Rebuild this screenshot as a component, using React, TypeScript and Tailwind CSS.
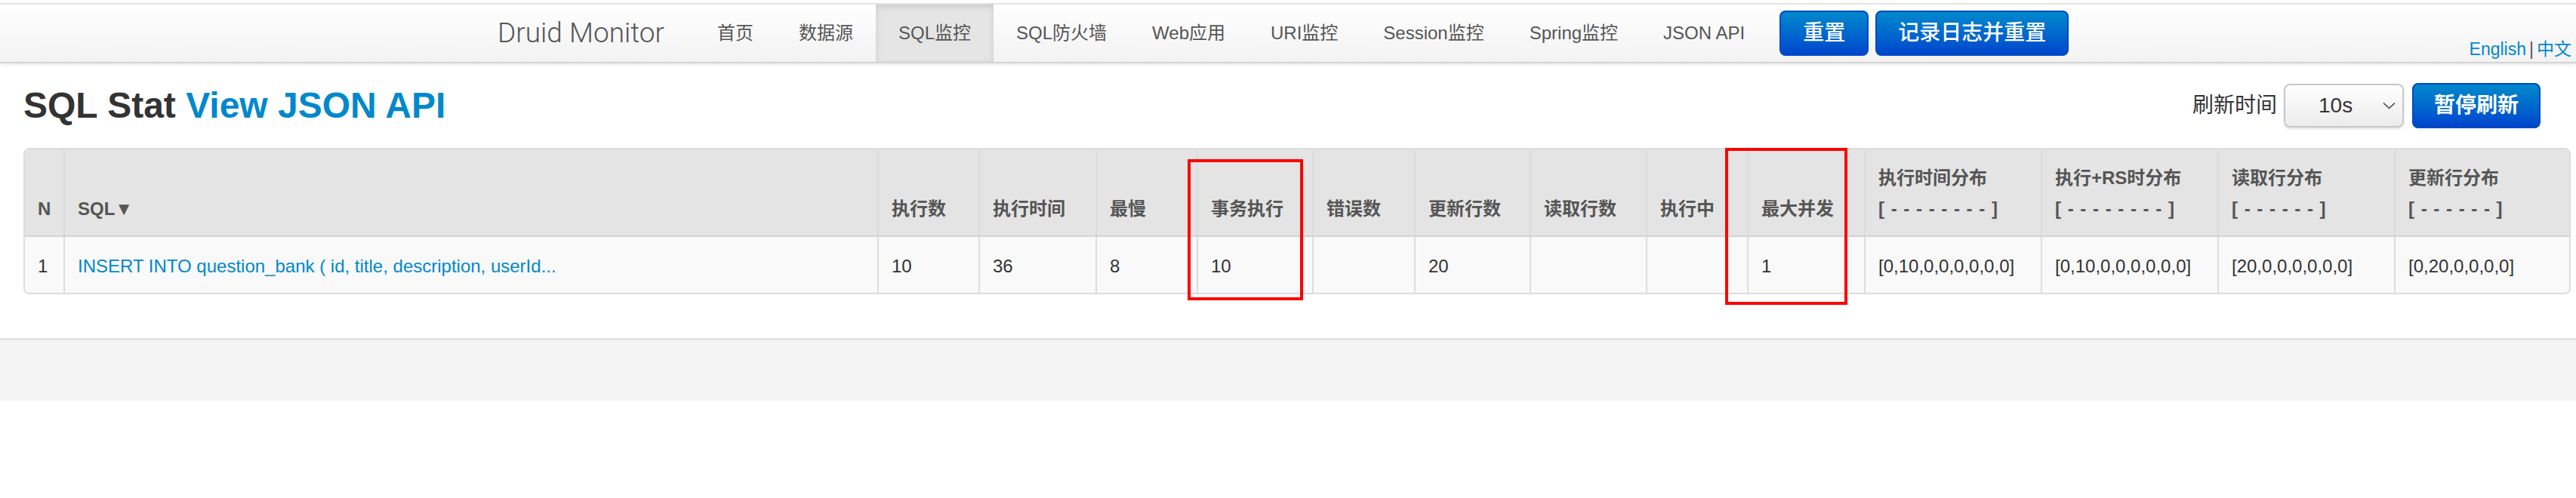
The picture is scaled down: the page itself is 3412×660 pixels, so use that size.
import React from 'react';

const font = { fontFamily: '"Liberation Sans", "Noto Sans CJK SC", sans-serif' };
const brandFont = { fontFamily: 'Roboto, "Liberation Sans", sans-serif' };

const navItems = ['首页', '数据源', 'SQL监控', 'SQL防火墙', 'Web应用', 'URI监控', 'Session监控', 'Spring监控', 'JSON API'];

const headers: { label: string; sub?: string }[] = [
  { label: 'N' },
  { label: 'SQL▼' },
  { label: '执行数' },
  { label: '执行时间' },
  { label: '最慢' },
  { label: '事务执行' },
  { label: '错误数' },
  { label: '更新行数' },
  { label: '读取行数' },
  { label: '执行中' },
  { label: '最大并发' },
  { label: '执行时间分布', sub: '[ - - - - - - - - ]' },
  { label: '执行+RS时分布', sub: '[ - - - - - - - - ]' },
  { label: '读取行分布', sub: '[ - - - - - - ]' },
  { label: '更新行分布', sub: '[ - - - - - - ]' },
];

const row = ['1', 'INSERT INTO question_bank ( id, title, description, userId...', '10', '36', '8', '10', '', '20', '', '', '1', '[0,10,0,0,0,0,0,0]', '[0,10,0,0,0,0,0,0]', '[20,0,0,0,0,0,0]', '[0,20,0,0,0,0]'];

const cols = 'grid grid-cols-[51px_1078px_134px_155px_134px_153px_135px_153px_154px_134px_155px_234px_234px_234px_232px]';

const App: React.FC = () => {
  return (
    <div className="relative w-[3412px] h-[660px] bg-white overflow-hidden" style={font}>
      {/* navbar */}
      <div className="pt-[4px]">
        <div className="h-[80px] border-t-2 border-b-2 border-t-[#e3e3e3] border-b-[#d4d4d4] bg-gradient-to-b from-white to-[#f2f2f2] shadow-[0_2px_4px_rgba(0,0,0,0.08)] flex items-stretch pl-[619px]">
          <div className="w-[301px] px-[40px] flex items-center text-[37px] text-[#555] font-light whitespace-nowrap" style={brandFont}>
            Druid Monitor
          </div>
          <ul className="flex items-stretch">
            {navItems.map((n) => (
              <li
                key={n}
                className={
                  'px-[30px] flex items-center text-[24px] text-[#555] ' +
                  (n === 'SQL监控' ? 'bg-[#e5e5e5] shadow-[inset_0_3px_8px_rgba(0,0,0,0.12)]' : '')
                }
              >
                {n}
              </li>
            ))}
          </ul>
          <div className="flex items-center gap-[9px] ml-[16px]">
            <button className="h-[60px] px-[29px] rounded-[8px] border-2 border-[#0048c0] bg-gradient-to-b from-[#0088cc] to-[#0044cc] text-white text-[28px] font-medium">
              重置
            </button>
            <button className="h-[60px] px-[28px] rounded-[8px] border-2 border-[#0048c0] bg-gradient-to-b from-[#0088cc] to-[#0044cc] text-white text-[28px] font-medium">
              记录日志并重置
            </button>
          </div>
          <div className="ml-auto self-end mb-[5px] pr-[6px] text-[23px] leading-none">
            <a className="text-[#0088cc]">English</a>
            <span className="text-[#555] px-[4px]">|</span>
            <a className="text-[#0088cc]">中文</a>
          </div>
        </div>
      </div>

      {/* title + refresh */}
      <div className="mt-[26px] pl-[31px] pr-[47px] h-[60px] flex items-center justify-between">
        <h2 className="text-[48px] leading-none font-bold text-[#333]">
          SQL Stat <a className="text-[#0088cc]">View JSON API</a>
        </h2>
        <div className="flex items-center">
          <span className="text-[28px] text-[#333]">刷新时间</span>
          <div className="ml-[9px] w-[159px] h-[58px] rounded-[8px] border-2 border-[#c8c8c8] bg-gradient-to-b from-white to-[#ececec] shadow-[0_2px_3px_rgba(0,0,0,0.12)] flex items-center pl-[44px] pr-[9px]">
            <span className="text-[28px] text-[#333]">10s</span>
            <svg className="ml-auto" width="17" height="10" viewBox="0 0 17 10">
              <polyline points="1,1.5 8.5,8.5 16,1.5" fill="none" stroke="#444" strokeWidth="1.6" />
            </svg>
          </div>
          <button className="ml-[11px] h-[60px] w-[170px] rounded-[8px] border-2 border-[#0048c0] bg-gradient-to-b from-[#0088cc] to-[#0044cc] text-white text-[28px] font-bold">
            暂停刷新
          </button>
        </div>
      </div>

      {/* table */}
      <div className="mt-[26px] ml-[31px] w-[3374px] rounded-[8px] border-2 border-[#dddddd] overflow-hidden">
        <div className={cols + ' bg-[#e4e4e4] border-b-2 border-[#d4d4d4]'}>
          {headers.map((h, i) => (
            <div
              key={i}
              className={
                'flex flex-col justify-end px-[17px] pt-[17px] pb-[15px] text-[24px] leading-[41px] font-bold text-[#555] whitespace-nowrap ' +
                (i > 0 ? 'border-l-2 border-[#dcdcdc]' : '')
              }
            >
              <span>{h.label}</span>
              {h.sub && <span className="tracking-[1px]">{h.sub}</span>}
            </div>
          ))}
        </div>
        <div className={cols + ' bg-[#f9f9f9]'}>
          {row.map((c, i) => (
            <div
              key={i}
              className={
                'px-[17px] pt-[18px] pb-[15px] text-[24px] leading-[41px] whitespace-nowrap ' +
                (i === 1 ? 'text-[#0088cc] ' : 'text-[#333] ') +
                (i > 0 ? 'border-l-2 border-[#dddddd]' : '')
              }
            >
              {c}
            </div>
          ))}
        </div>
      </div>

      {/* footer */}
      <div className="mt-[58px] h-[83px] border-t-[3px] border-[#e3e3e3] bg-[#f4f4f4]" />

      {/* annotation boxes */}
      <div className="absolute left-[1573px] top-[211px] w-[153px] h-[187px] border-4 border-[#ff0000]" />
      <div className="absolute left-[2285px] top-[196px] w-[162px] h-[208px] border-4 border-[#ff0000]" />
    </div>
  );
};

export default App;
